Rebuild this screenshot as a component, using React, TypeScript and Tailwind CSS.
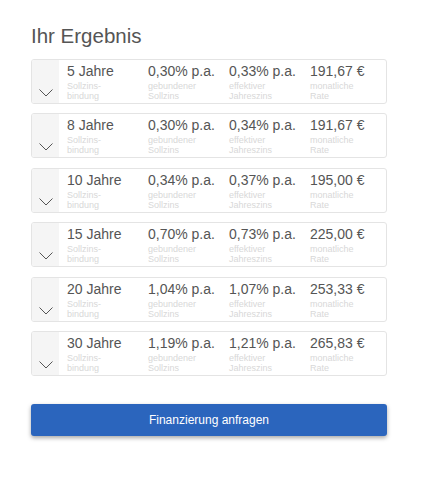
import React from "react";

const rows = [
  ["5 Jahre", "0,30% p.a.", "0,33% p.a.", "191,67 €"],
  ["8 Jahre", "0,30% p.a.", "0,34% p.a.", "191,67 €"],
  ["10 Jahre", "0,34% p.a.", "0,37% p.a.", "195,00 €"],
  ["15 Jahre", "0,70% p.a.", "0,73% p.a.", "225,00 €"],
  ["20 Jahre", "1,04% p.a.", "1,07% p.a.", "253,33 €"],
  ["30 Jahre", "1,19% p.a.", "1,21% p.a.", "265,83 €"],
];

const labels = [
  ["Sollzins-", "bindung"],
  ["gebundener", "Sollzins"],
  ["effektiver", "Jahreszins"],
  ["monatliche", "Rate"],
];

export default function App() {
  return (
    <div
      className="w-[422px] h-[479px] bg-white pt-[24px] pl-[31px] pr-[35px]"
      style={{ fontFamily: "'Liberation Sans', Arial, sans-serif" }}
    >
      <h1 className="text-[20.5px] leading-[24px] text-[#555555] font-normal">Ihr Ergebnis</h1>
      <div className="mt-[11px] flex flex-col gap-[9.4px]">
        {rows.map((r, i) => (
          <div
            key={i}
            className="flex h-[45px] border border-[#e4e4e4] rounded-[3px] overflow-hidden"
          >
            <div className="w-[27px] shrink-0 bg-[#f5f5f5] flex items-end justify-center pb-[6px]">
              <svg width="14" height="8" viewBox="0 0 14 8" fill="none">
                <path d="M0.5 0.5 L7 7 L13.5 0.5" stroke="#555" strokeWidth="1" />
              </svg>
            </div>
            <div className="flex flex-1 min-w-0 pl-[8px] pt-[3px]">
              {r.map((v, j) => (
                <div key={j} className={j < 3 ? "w-[81px] shrink-0" : "flex-1 min-w-0"}>
                  <div className="text-[14px] leading-[17px] text-[#555555] whitespace-nowrap">{v}</div>
                  <div className="text-[9px] leading-[10px] text-[#d8d8d8] mt-[1px]">
                    {labels[j][0]}
                    <br />
                    {labels[j][1]}
                  </div>
                </div>
              ))}
            </div>
          </div>
        ))}
      </div>
      <button className="mt-[28px] w-[356px] h-[32px] bg-[#2b65bd] rounded-[3px] text-white text-[12px] shadow-[0_2px_4px_rgba(0,0,0,0.35)]">
        Finanzierung anfragen
      </button>
    </div>
  );
}
